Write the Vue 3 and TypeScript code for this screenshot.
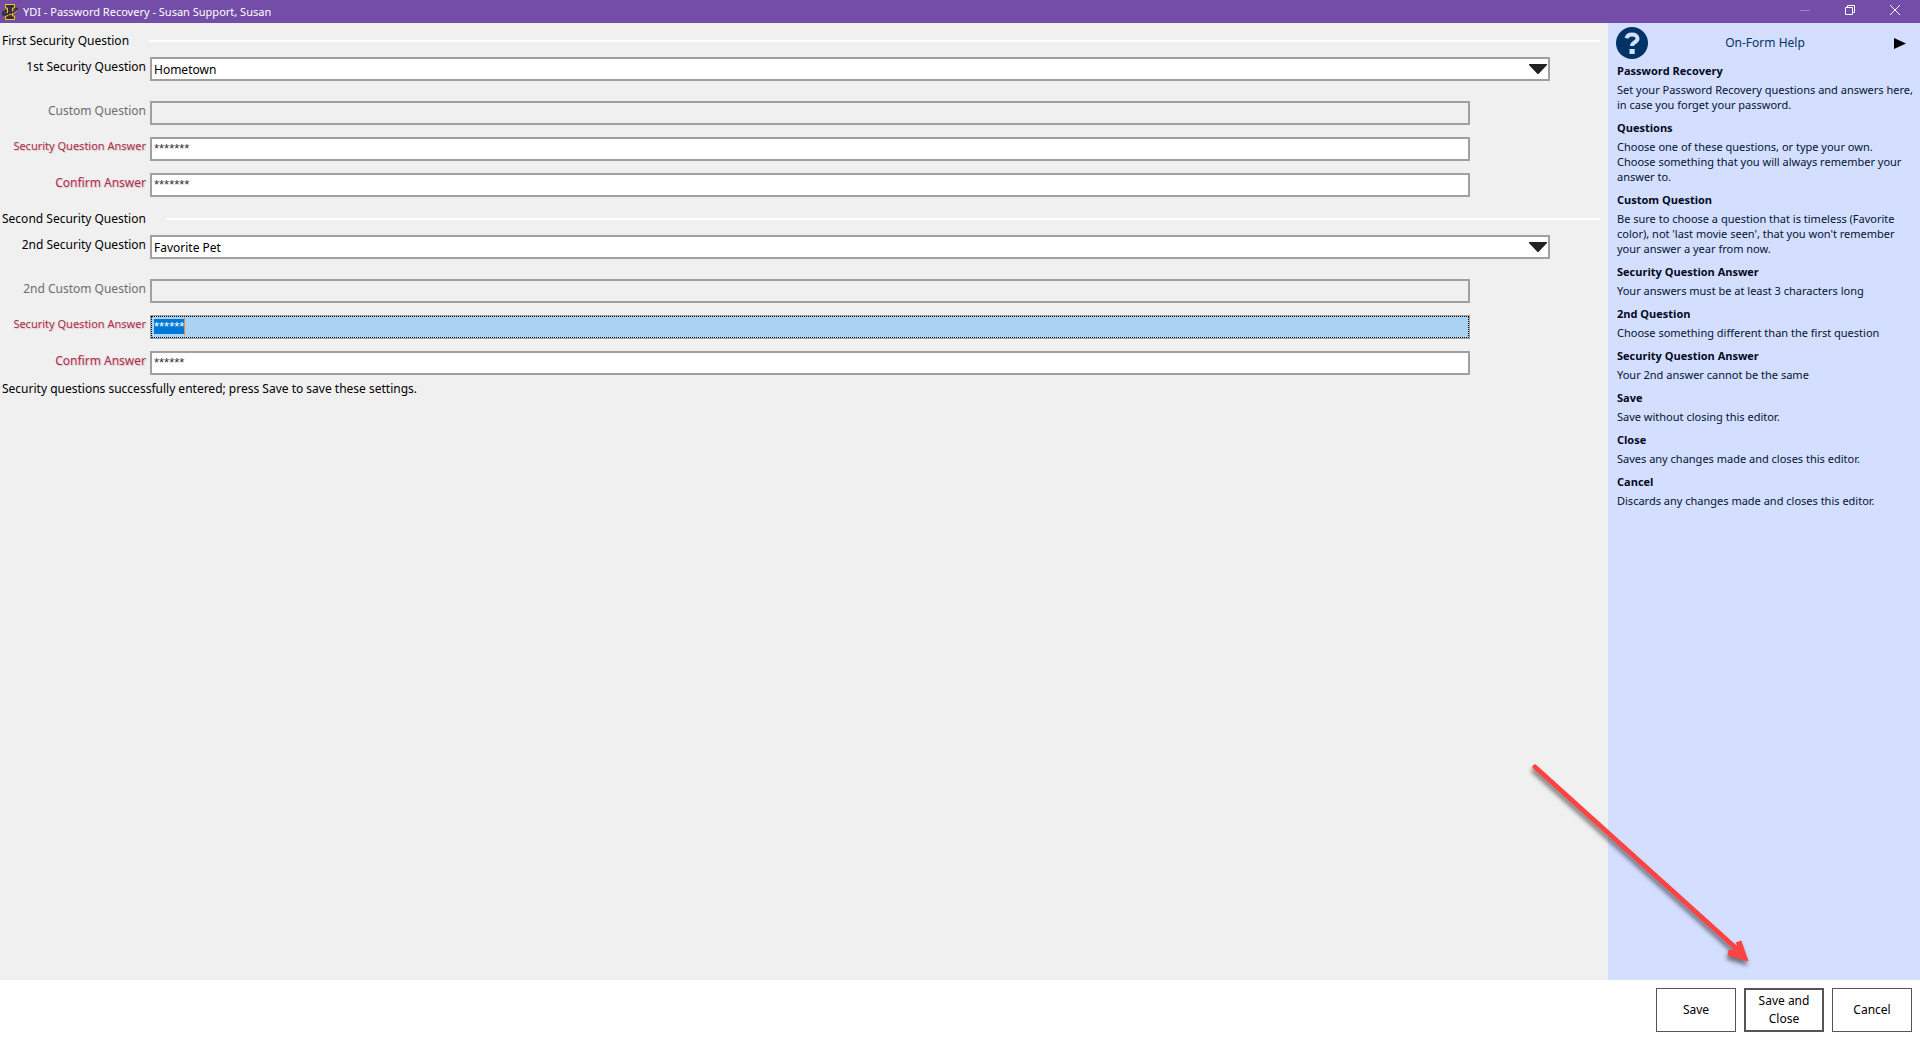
<script setup lang="ts">
import { onMounted, reactive, ref } from 'vue'

interface QuestionGroup {
  key: string
  heading: string
  questionLabel: string
  question: string
  options: string[]
  customLabel: string
  custom: string
  answer: string
  confirm: string
}

interface HelpTopic {
  title: string
  lines: string[]
}

const groups = reactive<QuestionGroup[]>([
  {
    key: 'first',
    heading: 'First Security Question',
    questionLabel: '1st Security Question',
    question: 'Hometown',
    options: ['Hometown', 'Favorite Pet'],
    customLabel: 'Custom Question',
    custom: '',
    answer: '*******',
    confirm: '*******',
  },
  {
    key: 'second',
    heading: 'Second Security Question',
    questionLabel: '2nd Security Question',
    question: 'Favorite Pet',
    options: ['Hometown', 'Favorite Pet'],
    customLabel: '2nd Custom Question',
    custom: '',
    answer: '******',
    confirm: '******',
  },
])

const topics: HelpTopic[] = [
  {
    title: 'Password Recovery',
    lines: ['Set your Password Recovery questions and answers here,', 'in case you forget your password.'],
  },
  {
    title: 'Questions',
    lines: [
      'Choose one of these questions, or type your own.',
      'Choose something that you will always remember your',
      'answer to.',
    ],
  },
  {
    title: 'Custom Question',
    lines: [
      'Be sure to choose a question that is timeless (Favorite',
      "color), not 'last movie seen', that you won't remember",
      'your answer a year from now.',
    ],
  },
  { title: 'Security Question Answer', lines: ['Your answers must be at least 3 characters long'] },
  { title: '2nd Question', lines: ['Choose something different than the first question'] },
  { title: 'Security Question Answer', lines: ['Your 2nd answer cannot be the same'] },
  { title: 'Save', lines: ['Save without closing this editor.'] },
  { title: 'Close', lines: ['Saves any changes made and closes this editor.'] },
  { title: 'Cancel', lines: ['Discards any changes made and closes this editor.'] },
]

const activeField = ref('second')
const form = ref<HTMLFormElement | null>(null)

onMounted(() => {
  const field = form.value?.querySelector<HTMLInputElement>(`#${activeField.value}-answer`)
  field?.focus()
  field?.select()
})
</script>

<template>
  <div class="window">
    <header class="titlebar">
      <svg class="logo" viewBox="0 0 16 16" aria-hidden="true">
        <path d="M6 7C2.500 7 .3 8.400.5 9.800c.4 1.800 4.500 1.500 8.500.2 4-1.400 6.800-3.500 6.200-4.900-.4-.8-2-.8-3.700-.5" fill="none" stroke="#33303c" stroke-width="2" />
        <path d="M3.500.5h9v3.500h-2v8h2v3.500h-9V12h2V4h-2z" fill="#33303c" stroke="#f7c80f" />
        <path d="M2 10.200c4.500.5 11-1.700 13-4.700" fill="none" stroke="#33303c" stroke-width="2" />
        <path d="M6.500 11c3.500-.5 7.500-2.300 8.900-4.700" fill="none" stroke="#f7c80f" />
      </svg>
      <h1>YDI - Password Recovery - Susan Support, Susan</h1>
      <div class="controls">
        <button type="button" aria-label="Minimize" disabled>
          <svg viewBox="0 0 10 10"><path d="M0 5.500h10" /></svg>
        </button>
        <button type="button" aria-label="Restore">
          <svg viewBox="0 0 10 10"><path d="M.5 2.500h7v7h-7zM2.500 2.500v-2h7v7h-2" /></svg>
        </button>
        <button type="button" aria-label="Close window">
          <svg viewBox="0 0 10 10"><path d="M0 0l10 10M10 0L0 10" /></svg>
        </button>
      </div>
    </header>

    <div class="body">
      <main>
        <form id="recovery" ref="form" @submit.prevent>
          <section v-for="g in groups" :key="g.key" class="group">
            <div class="heading">
              <h2>{{ g.heading }}</h2>
              <span class="rule"></span>
            </div>
            <div class="row question">
              <label :for="`${g.key}-question`">{{ g.questionLabel }}</label>
              <div class="picker">
                <select :id="`${g.key}-question`" v-model="g.question">
                  <option v-for="o in g.options" :key="o">{{ o }}</option>
                </select>
                <svg class="chevron" viewBox="0 0 18 10" aria-hidden="true"><path d="M0 0h18v1L9.500 10h-1L0 1z" /></svg>
              </div>
            </div>
            <div class="row">
              <label class="muted" :for="`${g.key}-custom`">{{ g.customLabel }}</label>
              <div class="field"><input :id="`${g.key}-custom`" v-model="g.custom" type="text" disabled /></div>
            </div>
            <div class="row">
              <label class="required small" :for="`${g.key}-answer`">Security Question Answer</label>
              <div class="field">
                <input
                  :id="`${g.key}-answer`"
                  v-model="g.answer"
                  class="masked"
                  :class="{ active: activeField === g.key }"
                  type="text"
                  autocomplete="off"
                />
                <span v-if="activeField === g.key" class="caret"></span>
              </div>
            </div>
            <div class="row">
              <label class="required" :for="`${g.key}-confirm`">Confirm Answer</label>
              <div class="field"><input :id="`${g.key}-confirm`" v-model="g.confirm" class="masked" type="text" autocomplete="off" /></div>
            </div>
          </section>
          <p class="status" role="status">Security questions successfully entered; press Save to save these settings.</p>
        </form>
      </main>

      <aside>
        <div class="help-head">
          <svg class="help-icon" viewBox="0 0 32 32" aria-hidden="true">
            <circle cx="16" cy="16" r="16" fill="#003366" />
            <path d="M10.500 11.300C11.200 8.600 13.500 7.500 16 7.500c3.200 0 5.500 1.500 5.500 4.200 0 3.800-5.500 3.300-5.500 7.300" fill="none" stroke="#d4deff" stroke-width="4" />
            <path d="M13.500 22h5.200v5h-5.200z" fill="#d4deff" />
          </svg>
          <h2>On-Form Help</h2>
          <button type="button" class="collapse" aria-label="Collapse help">
            <svg viewBox="0 0 12 11"><path d="M0 0l12 5.500L0 11z" /></svg>
          </button>
        </div>
        <dl>
          <template v-for="(t, i) in topics" :key="i">
            <dt>{{ t.title }}</dt>
            <dd><span v-for="line in t.lines" :key="line">{{ line }}</span></dd>
          </template>
        </dl>
      </aside>
    </div>

    <footer>
      <button type="button">Save</button>
      <button type="submit" form="recovery" class="default">Save and Close</button>
      <button type="button">Cancel</button>
    </footer>

    <svg class="pointer" viewBox="0 0 240 220" aria-hidden="true">
      <path d="M15 12L218 195" fill="none" stroke="#ff4343" stroke-width="5" stroke-linecap="round" />
      <path d="M228 206L208 200 209 195 216 196 218 195 217 188 216 188 221 186z" fill="#ff4343" stroke="#ff4343" stroke-width="1" />
    </svg>
  </div>
</template>

<style>
body {
  margin: 0;
}
</style>

<style scoped>
.window {
  position: relative;
  display: flex;
  flex-direction: column;
  min-height: 100vh;
  background: #f0f0f0;
  color: #000;
  font: 12px/18px "Noto Sans", "Open Sans", sans-serif;
}

.window * {
  box-sizing: border-box;
}

h1,
h2,
p,
dl,
dd {
  margin: 0;
  font-size: 12px;
  font-weight: 400;
}

button {
  padding: 0;
  border: 0;
  background: none;
  color: inherit;
  font: inherit;
}

svg {
  display: block;
}

.titlebar {
  display: flex;
  align-items: center;
  height: 23px;
  padding: 0 3px 0 2px;
  background: #744da9;
  color: #fff;
}

.logo {
  width: 16px;
  height: 16px;
  margin-right: 5px;
}

.titlebar h1 {
  flex: 1;
  font-size: 11px;
}

.controls {
  display: flex;
  align-self: stretch;
}

.controls button {
  display: flex;
  justify-content: center;
  width: 45px;
  padding-top: 5px;
}

.controls svg {
  width: 10px;
  height: 10px;
  overflow: visible;
  fill: none;
  stroke: #fff;
}

.controls button:disabled {
  opacity: 0.3;
}

.body {
  display: flex;
  flex: 1;
}

main {
  flex: 1;
}

.group {
  padding-top: 8px;
}

.group + .group {
  padding-top: 12px;
}

.heading {
  display: flex;
  align-items: center;
  height: 20px;
  padding: 0 8px 0 2px;
}

.rule {
  flex: 1;
  height: 2px;
  margin-left: 20px;
  background: #fff;
}

.row {
  display: flex;
  height: 24px;
  margin-top: 12px;
}

.row.question {
  margin: 6px 0 20px;
}

label {
  width: 150px;
  padding: 1px 4px 0 0;
  text-align: right;
}

.muted {
  color: #6d6d6d;
}

.required {
  color: #b02a48;
  text-shadow: 1px 1px 1px #d4c8d0;
}

.small {
  font-size: 11px;
  line-height: 16px;
}

.picker,
.field {
  position: relative;
  flex: 1;
  margin-right: 58px;
}

.field {
  margin-right: 138px;
}

select,
input {
  display: block;
  width: 100%;
  height: 24px;
  margin: 0;
  padding: 1px 2px 0;
  border: 2px solid #a0a0a0;
  border-radius: 0;
  outline: 0;
  background: #fff;
  color: #000;
  font: inherit;
  appearance: none;
}

input:disabled {
  background: #f0f0f0;
}

.masked {
  padding: 0 2px 2px;
  color: #333;
  font: 13px "Liberation Sans", Arial, sans-serif;
}

.masked.active {
  padding: 0 3px 2px;
  border-width: 1px;
  outline: 1px dotted #000;
  outline-offset: -2px;
  background: #a9d2f3;
}

.masked::selection {
  background: #0078d7;
  color: #fff;
}

.caret {
  position: absolute;
  top: 3px;
  left: 34px;
  width: 1px;
  height: 17px;
  background: #ff8728;
}

.chevron {
  position: absolute;
  top: 7px;
  right: 3px;
  width: 18px;
  height: 10px;
  fill: #222;
  pointer-events: none;
}

.status {
  padding: 5px 2px;
}

aside {
  width: 312px;
  padding: 0 4px 0 8px;
  background: #d4deff;
  color: #001433;
}

.help-head {
  display: flex;
  align-items: center;
  height: 40px;
  padding-right: 10px;
}

.help-icon {
  width: 32px;
  height: 32px;
}

.help-head h2 {
  flex: 1;
  padding-right: 12px;
  color: #003366;
  text-align: center;
}

.collapse svg {
  width: 12px;
  height: 11px;
}

dl {
  padding-left: 1px;
  font-size: 11px;
  line-height: 15px;
}

dt {
  margin: 0 0 4px;
  color: #00081c;
  font-family: "Open Sans", sans-serif;
  font-weight: 700;
}

dd {
  margin: 0 0 8px;
  font-size: 11px;
}

dd span {
  display: block;
  white-space: nowrap;
}

footer {
  display: flex;
  justify-content: flex-end;
  gap: 8px;
  padding: 8px;
  background: #fff;
}

footer button {
  width: 80px;
  height: 44px;
  padding: 0 8px;
  border: 1px solid #555;
}

footer .default {
  border-width: 2px;
}

.pointer {
  position: absolute;
  right: 160px;
  bottom: 65px;
  width: 240px;
  height: 220px;
  filter: drop-shadow(-1px 4px 2px rgba(0, 0, 0, 0.5));
  pointer-events: none;
}
</style>
